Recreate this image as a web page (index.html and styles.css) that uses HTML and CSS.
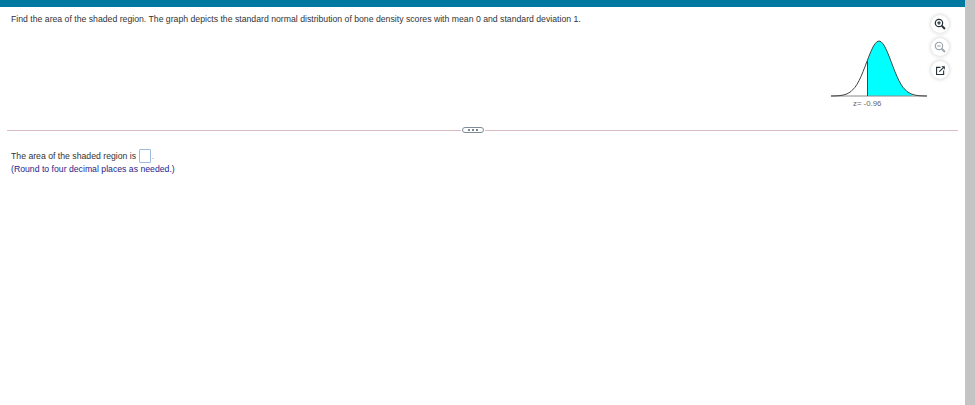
FILE: index.html
```html
<!DOCTYPE html>
<html lang="en">
<head>
<meta charset="utf-8">
<title>Area of the shaded region</title>
<link rel="stylesheet" href="styles.css">
</head>
<body>
<div class="app">
  <main class="content">
    <div class="topbar"></div>
    <section class="question">
      <p class="prompt">Find the area of the shaded region. The graph depicts the standard normal distribution of bone density scores with mean 0 and standard deviation 1.</p>
      <div class="figure">
        <div class="graph">
          <svg class="curve" width="100" height="60" viewBox="829 40 100 60">
            <path class="shade" d="M867 61.3L869 56.1L871 51.2L873 47L875 43.8L877 41.7L879 41L881 41.7L883 43.8L885 47L887 51.2L889 56.1L891 61.3L893 66.6L895 71.7L897 76.5L899 80.7L901 84.3L903 87.3L907 91.5L911 93.9L913 96L867 96Z"/>
            <path class="base" d="M831 96H927"/>
            <path class="zline" d="M867.5 61V96"/>
            <path class="bell" d="M831 96L835 95.9L839 95.7L843 95.1L847 93.9L851 91.5L855 87.3L857 84.3L859 80.7L861 76.5L863 71.7L865 66.6L867 61.3L869 56.1L871 51.2L873 47L875 43.8L877 41.7L879 41L881 41.7L883 43.8L885 47L887 51.2L889 56.1L891 61.3L893 66.6L895 71.7L897 76.5L899 80.7L901 84.3L903 87.3L907 91.5L911 93.9L915 95.1L919 95.7L923 95.9L927 96"/>
          </svg>
          <span class="zlabel">z= -0.96</span>
        </div>
        <div class="tools">
          <button class="tool" aria-label="Zoom in">
            <svg width="12" height="12" viewBox="0 0 14 14"><circle class="ic-dark" cx="5.8" cy="5.8" r="4.3"/><path class="ic-dark" d="M3.8 5.8H7.8M5.8 3.8V7.8"/><path class="ic-dark ic-thick" d="M9 9L12.8 12.8"/></svg>
          </button>
          <button class="tool" aria-label="Zoom out">
            <svg width="12" height="12" viewBox="0 0 14 14"><circle class="ic-muted" cx="5.8" cy="5.8" r="4.3"/><path class="ic-muted" d="M3.8 5.8H7.8"/><path class="ic-muted ic-thick" d="M9 9L12.8 12.8"/></svg>
          </button>
          <button class="tool" aria-label="Open in new window">
            <svg width="11" height="11" viewBox="0 0 14 14"><path class="ic-dark" d="M7 3H2V12H11V7"/><path class="ic-dark" d="M5.5 8.5L10 4"/><path class="ic-fill" d="M8 1.5H12.5V6Z"/></svg>
          </button>
        </div>
      </div>
    </section>
    <div class="divider">
      <button class="more" aria-label="Show more"><i></i><i></i><i></i></button>
    </div>
    <section class="answer">
      <p class="answer-line">The area of the shaded region is <span class="input"></span><span class="period">.</span></p>
      <p class="hint">(Round to four decimal places as needed.)</p>
    </section>
  </main>
  <div class="scrollbar"></div>
</div>
</body>
</html>
```
FILE: styles.css
```css
* { box-sizing: border-box; }
html, body { margin: 0; height: 100%; background: #fff; overflow: hidden; }
body { font-family: "Liberation Sans", Arial, sans-serif; font-size: 8.7px; color: #333; }
p { margin: 0; }

.app { display: flex; height: 405px; }
.content { flex: 1; min-width: 0; }
.scrollbar { width: 10px; background: #c4c4c4; }
.topbar { height: 7px; background: #00789f; }

.question { display: flex; justify-content: space-between; height: 117px; padding: 7px 16px 0 11px; }
.prompt { line-height: 10px; }
.figure { display: flex; gap: 2px; padding-top: 1px; }
.graph { width: 100px; padding-top: 25px; }
.curve { display: block; }
.shade { fill: #00ffff; stroke: none; }
.base { fill: none; stroke: #8a8a8a; stroke-width: 1; }
.zline { fill: none; stroke: #444; stroke-width: 1; }
.bell { fill: none; stroke: #444; stroke-width: 1; stroke-linejoin: round; }
.zlabel { display: block; margin-top: -1px; padding-left: 24px; font-size: 7.8px; line-height: 9px; color: #666; }

.tools { display: flex; flex-direction: column; gap: 5px; }
.tool { display: flex; align-items: center; justify-content: center; width: 18px; height: 18px; padding: 0; border: 0; border-radius: 50%; background: #fff; box-shadow: 0 0 4px rgba(0,0,0,.22); }
.tool svg { display: block; }
.ic-dark { fill: none; stroke: #26323a; stroke-width: 1.4; }
.ic-muted { fill: none; stroke: #9aa4aa; stroke-width: 1.3; }
.ic-thick { stroke-width: 2.2; }
.ic-fill { fill: #26323a; }

.divider { display: flex; align-items: center; height: 12px; margin: 0 7px; padding-left: 455px; background: linear-gradient(#d9bcc4, #d9bcc4) center / 100% 1px no-repeat; }
.more { display: flex; align-items: center; justify-content: center; gap: 2px; width: 22px; height: 6px; padding: 0; border: 1px solid #7d8d98; border-radius: 3px; background: #fff; box-shadow: 0 0 0 1px #fff; }
.more i { width: 2px; height: 2px; background: #7a8791; }

.answer { padding: 13px 0 0 11px; }
.answer-line { display: flex; align-items: center; height: 14px; white-space: pre; }
.input { width: 12px; height: 14px; margin-left: 0; border: 1px solid #9dbbdc; border-radius: 1px; background: #fff; }
.period { color: #9aa7b5; padding-left: 1px; }
.hint { line-height: 12px; color: #26268a; }
```
